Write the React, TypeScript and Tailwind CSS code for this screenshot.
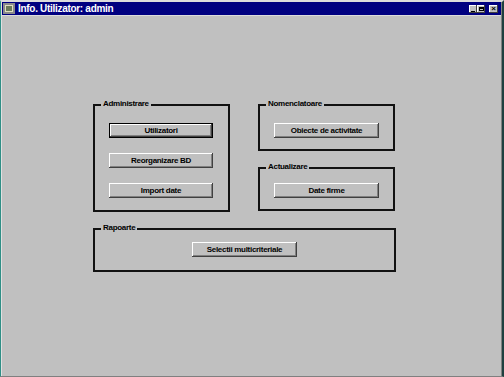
import React from 'react'

const font = { fontFamily: '"Liberation Sans", Arial, sans-serif' }

function WinButton({ label, isDefault, className = '' }: { label: string; isDefault?: boolean; className?: string }) {
  return (
    <button
      type="button"
      className={
        'h-[15px] bg-[#c0c0c0] text-[8px] font-bold tracking-[-0.3px] text-black leading-none flex items-center justify-center ' +
        (isDefault
          ? 'shadow-[inset_0_0_0_1px_#000,inset_-2px_-2px_#404040,inset_2px_2px_#fff,inset_-3px_-3px_#808080] '
          : 'shadow-[inset_-1px_-1px_#404040,inset_1px_1px_#fff,inset_-2px_-2px_#808080] ') +
        className
      }
    >
      {label}
    </button>
  )
}

function Group({ title, className = '', children }: { title: string; className?: string; children: React.ReactNode }) {
  return (
    <div className={'relative border-2 border-[#111] ' + className}>
      <span className="absolute -top-[7px] left-[6px] bg-[#c0c0c0] px-[2px] text-[8px] font-bold tracking-[-0.3px] leading-[10px] text-black">
        {title}
      </span>
      {children}
    </div>
  )
}

export default function App() {
  return (
    <div style={font} className="w-[504px] h-[377px] bg-[#c0c0c0] flex flex-col overflow-hidden border-t-2 border-t-[#dcdcdc] border-l border-l-[#2f8f86] border-r-2 border-r-[#1f4040] border-b border-b-[#808080]">
      <div className="flex flex-1 flex-col border-l border-l-[#e0e0e0] border-r border-r-[#808080]">
        {/* Title bar */}
        <div className="h-[13px] bg-[#000080] flex items-center pl-[1px] pr-[3px]">
          <div className="w-[12px] h-[11px] mr-[3px] bg-[#8a8a8a] flex items-center justify-center">
            <div className="w-[8px] h-[7px] bg-[#6a7a5a] border border-[#e0e0c0]" />
          </div>
          <span className="text-white text-[10px] font-bold tracking-[-0.3px] leading-none">Info. Utilizator: admin</span>
          <div className="ml-auto flex items-center">
            <div className="w-[8px] h-[8px] bg-[#c0c0c0] shadow-[inset_-1px_-1px_#404040,inset_1px_1px_#fff] flex items-end justify-center pb-[1px]">
              <div className="w-[4px] h-[1px] bg-black" />
            </div>
            <div className="w-[8px] h-[8px] bg-[#c0c0c0] shadow-[inset_-1px_-1px_#404040,inset_1px_1px_#fff] flex items-center justify-center">
              <div className="w-[5px] h-[4px] border border-black border-t-2" />
            </div>
            <div className="ml-[4px] w-[9px] h-[8px] bg-[#c0c0c0] shadow-[inset_-1px_-1px_#404040,inset_1px_1px_#fff] flex items-center justify-center text-[8px] font-bold leading-none text-black">
              ×
            </div>
          </div>
        </div>

        {/* Body */}
        <div className="flex-1 pl-[91px] pt-[88px] border-t border-t-[#dcdcdc]">
          <div className="flex gap-[28px]">
            <Group title="Administrare" className="w-[137px] h-[108px] pt-[17px] pl-[14px] flex flex-col gap-[15px]">
              <WinButton label="Utilizatori" isDefault className="w-[104px]" />
              <WinButton label="Reorganizare BD" className="w-[104px]" />
              <WinButton label="Import date" className="w-[104px]" />
            </Group>
            <div className="flex flex-col gap-[16px]">
              <Group title="Nomenclatoare" className="w-[137px] h-[47px] pt-[17px] pl-[14px]">
                <WinButton label="Obiecte de activitate" className="w-[105px]" />
              </Group>
              <Group title="Actualizare" className="w-[137px] h-[44px] pt-[14px] pl-[14px]">
                <WinButton label="Date firme" className="w-[105px]" />
              </Group>
            </div>
          </div>
          <Group title="Rapoarte" className="mt-[16px] w-[303px] h-[44px] pt-[12px] flex justify-center">
            <WinButton label="Selectii multicriteriale" className="w-[105px]" />
          </Group>
        </div>
      </div>
    </div>
  )
}
